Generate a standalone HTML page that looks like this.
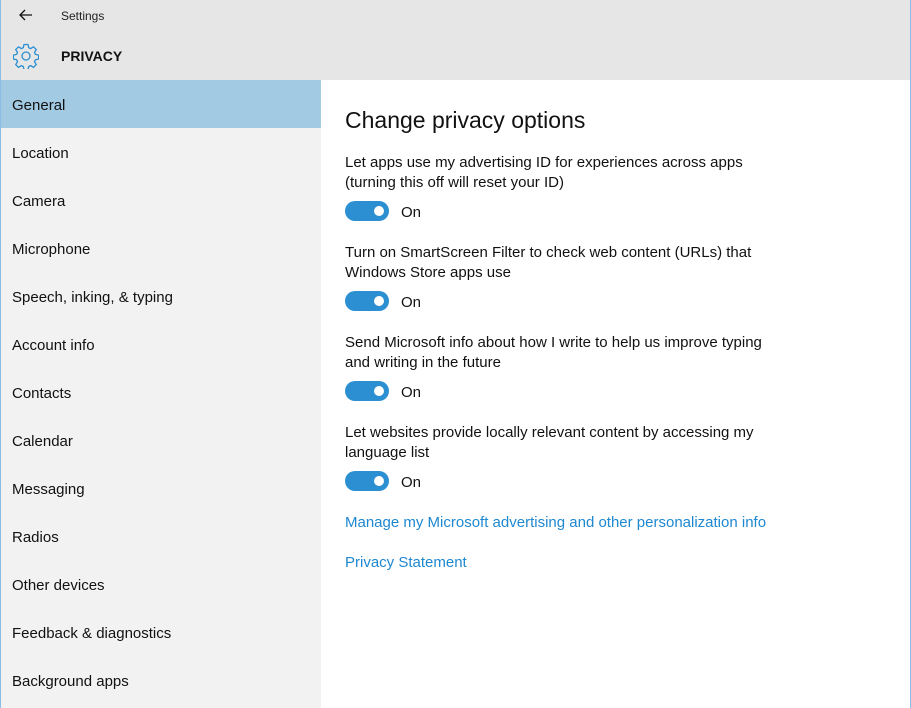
<!DOCTYPE html>
<html><head><meta charset="utf-8"><style>
*{margin:0;padding:0;box-sizing:border-box}
body{width:911px;height:708px;overflow:hidden;font-family:"Liberation Sans",sans-serif;background:#fff;position:relative;color:#000}
.top{position:absolute;left:0;top:0;width:911px;height:80px;background:#e6e6e6;border-left:1px solid #8cbde8;border-right:1px solid #8cbde8}
.title{position:absolute;left:60px;top:9px;font-size:12px;color:#222}
.back{position:absolute;left:17px;top:6px}
.priv{position:absolute;left:60px;top:48px;font-size:14px;font-weight:bold;color:#111}
.gear{position:absolute;left:12px;top:43px}
.side{position:absolute;left:0;top:80px;width:321px;height:628px;background:#f2f2f2;border-left:1px solid #8cbde8}
.item{height:48px;line-height:48px;padding-left:11px;padding-top:2px;font-size:15px;color:#111}
.item.sel{background:#a3cae3}
h1{position:absolute;left:345px;top:107px;font-size:23px;font-weight:normal;color:#111;white-space:nowrap}
.p{position:absolute;left:345px;font-size:15px;line-height:20px;color:#111;white-space:nowrap}
.tg{position:absolute;left:345px;width:44px;height:20px;border-radius:10px;background:#2b8fd2}
.tg::after{content:"";position:absolute;left:29px;top:5px;width:10px;height:10px;border-radius:50%;background:#fff}
.on{position:absolute;left:401px;font-size:15px;color:#111}
.lk{position:absolute;left:345px;font-size:15px;color:#1e88d0;white-space:nowrap}
.rb{position:absolute;right:0;top:80px;width:1px;height:628px;background:#8cbde8}
</style></head><body>
<div class="top">
<svg class="back" width="16" height="18" viewBox="0 0 16 18"><path d="M14 9H2M7 4L2 9l5 5" stroke="#111" stroke-width="1.3" fill="none"/></svg>
<div class="title">Settings</div>
<svg class="gear" width="26" height="26" viewBox="0 0 26 26"><path d="M11 1.5h4l.7 3.2 2 .9 2.8-1.8 2.8 2.8-1.8 2.8.9 2 3.2.7v4l-3.2.7-.9 2 1.8 2.8-2.8 2.8-2.8-1.8-2 .9-.7 3.2h-4l-.7-3.2-2-.9-2.8 1.8-2.8-2.8 1.8-2.8-.9-2-3.2-.7v-4l3.2-.7.9-2-1.8-2.8 2.8-2.8 2.8 1.8 2-.9z" fill="none" stroke="#2b8fd2" stroke-width="1.3" stroke-linejoin="round"/><circle cx="13" cy="13" r="4" fill="none" stroke="#2b8fd2" stroke-width="1.3"/></svg>
<div class="priv">PRIVACY</div>
</div>
<div class="side">
<div class="item sel">General</div>
<div class="item">Location</div>
<div class="item">Camera</div>
<div class="item">Microphone</div>
<div class="item">Speech, inking, &amp; typing</div>
<div class="item">Account info</div>
<div class="item">Contacts</div>
<div class="item">Calendar</div>
<div class="item">Messaging</div>
<div class="item">Radios</div>
<div class="item">Other devices</div>
<div class="item">Feedback &amp; diagnostics</div>
<div class="item">Background apps</div>
</div>
<div class="rb"></div>
<h1>Change privacy options</h1>
<div class="p" style="top:153px">Let apps use my advertising ID for experiences across apps<br>(turning this off will reset your ID)</div>
<div class="tg" style="top:201px"></div><div class="on" style="top:204px">On</div>
<div class="p" style="top:243px">Turn on SmartScreen Filter to check web content (URLs) that<br>Windows Store apps use</div>
<div class="tg" style="top:291px"></div><div class="on" style="top:294px">On</div>
<div class="p" style="top:333px">Send Microsoft info about how I write to help us improve typing<br>and writing in the future</div>
<div class="tg" style="top:381px"></div><div class="on" style="top:384px">On</div>
<div class="p" style="top:423px">Let websites provide locally relevant content by accessing my<br>language list</div>
<div class="tg" style="top:471px"></div><div class="on" style="top:474px">On</div>
<div class="lk" style="top:514px">Manage my Microsoft advertising and other personalization info</div>
<div class="lk" style="top:554px">Privacy Statement</div>
</body></html>
